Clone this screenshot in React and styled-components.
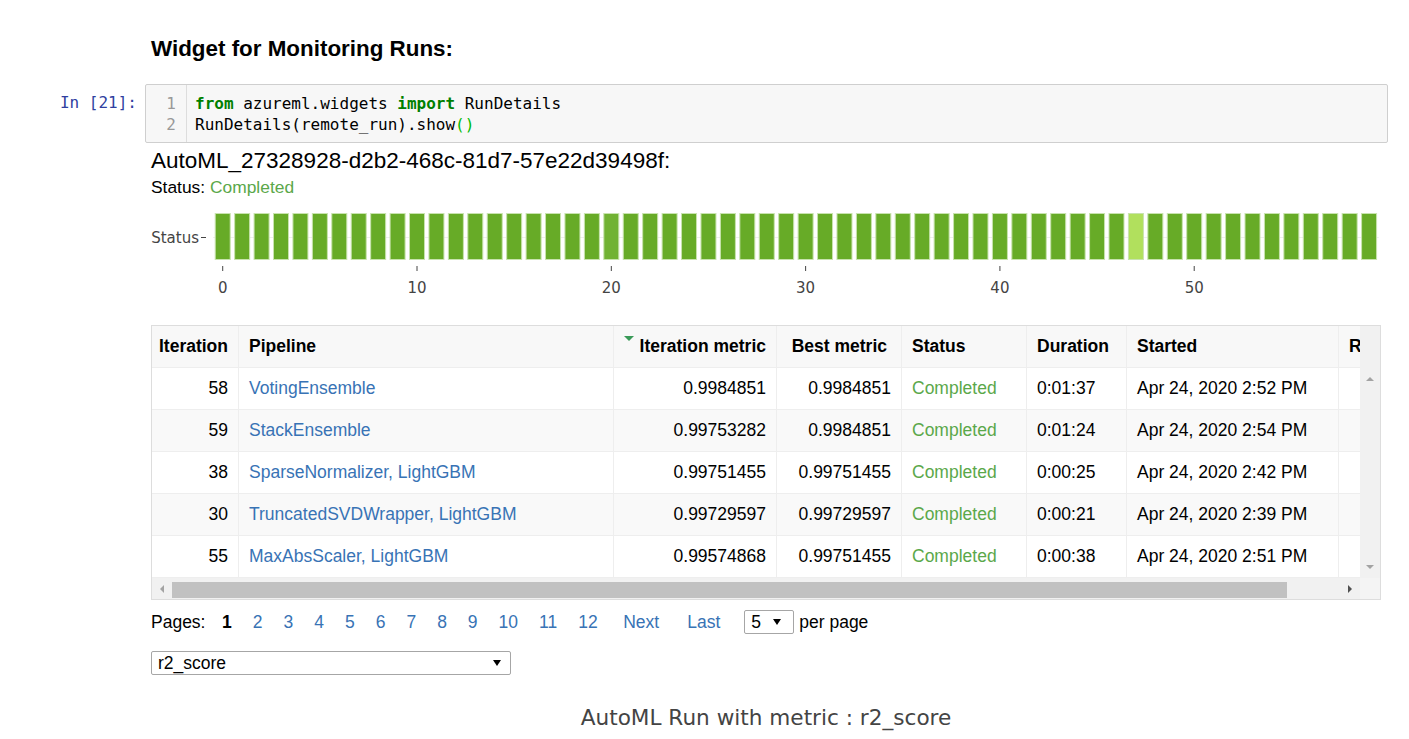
import styled, { createGlobalStyle } from "styled-components";

const GlobalStyle = createGlobalStyle`
  body {
    margin: 0;
    background: #fff;
    color: #000;
    font-family: "Liberation Sans", Arial, sans-serif;
  }
`;

const BAR_COUNT = 60;
const PITCH = 19.43;
const BAR_LEFT = 62;

const barFill = (i) => {
  if (i === 47) return "#b1e05d";
  if (i === 20) return "#71b233";
  return "#67ab27";
};

const COLUMNS = [
  { title: "Iteration", width: 87, align: "right" },
  { title: "Pipeline", width: 375, align: "left" },
  { title: "Iteration metric", width: 163, align: "right", sorted: true },
  { title: "Best metric", width: 125, align: "right", pad: 14 },
  { title: "Status", width: 125, align: "left" },
  { title: "Duration", width: 100, align: "left" },
  { title: "Started", width: 212, align: "left" },
  { title: "Run ID", width: 150, align: "left" },
];

const runs = [
  ["58", "VotingEnsemble", "0.9984851", "0.9984851", "0:01:37", "Apr 24, 2020 2:52 PM"],
  ["59", "StackEnsemble", "0.99753282", "0.9984851", "0:01:24", "Apr 24, 2020 2:54 PM"],
  ["38", "SparseNormalizer, LightGBM", "0.99751455", "0.99751455", "0:00:25", "Apr 24, 2020 2:42 PM"],
  ["30", "TruncatedSVDWrapper, LightGBM", "0.99729597", "0.99729597", "0:00:21", "Apr 24, 2020 2:39 PM"],
  ["55", "MaxAbsScaler, LightGBM", "0.99574868", "0.99751455", "0:00:38", "Apr 24, 2020 2:51 PM"],
];

const pages = ["2", "3", "4", "5", "6", "7", "8", "9", "10", "11", "12"];

const gridColumns = COLUMNS.map((c) => `${c.width}px`).join(" ");

const Page = styled.div`
  width: 1409px;
  padding-top: 36px;
`;

const MarkdownRow = styled.div`
  padding-left: 151px;
`;

const Heading = styled.h3`
  margin: 0;
  font-size: 22.4px;
  line-height: 26px;
  font-weight: 700;
`;

const CellRow = styled.div`
  display: flex;
  margin-top: 22px;
`;

const Prompt = styled.div`
  width: 145px;
  box-sizing: border-box;
  padding: 8px 8px 0 0;
  text-align: right;
  font-family: "DejaVu Sans Mono", monospace;
  font-size: 16px;
  line-height: 21px;
  color: #303f9f;
`;

const CodeBox = styled.div`
  width: 1243px;
  box-sizing: border-box;
  display: flex;
  border: 1px solid #cfcfcf;
  border-radius: 2px;
  background: #f7f7f7;
`;

const Gutter = styled.div`
  width: 41px;
  box-sizing: border-box;
  padding: 7.5px 10px 7.5px 0;
  border-right: 1px solid #ddd;
  text-align: right;
  font-family: "DejaVu Sans Mono", monospace;
  font-size: 16px;
  line-height: 21px;
  color: #999;
`;

const CodeLines = styled.div`
  padding: 7.5px 8px;
  font-family: "DejaVu Sans Mono", monospace;
  font-size: 16px;
  line-height: 21px;
  white-space: pre;
  color: #000;
`;

const Keyword = styled.span`
  color: #008000;
  font-weight: 700;
`;

const Bracket = styled.span`
  color: #00bb00;
`;

const Output = styled.div`
  padding-left: 151px;
  margin-top: 6px;
`;

const RunTitle = styled.div`
  font-size: 22.5px;
  line-height: 24px;
`;

const StatusLine = styled.div`
  margin-top: 4px;
  font-size: 17.4px;
  line-height: 20px;
`;

const Done = styled.span`
  color: #5ba84a;
`;

const Chart = styled.svg`
  display: block;
  margin-top: 3px;
  overflow: visible;
  font-family: "DejaVu Sans", Verdana, sans-serif;
`;

const Frame = styled.div`
  margin-top: 15px;
  width: 1230px;
  box-sizing: border-box;
  border: 1px solid #ddd;
  display: grid;
  grid-template-columns: 1208px 20px;
  grid-template-rows: 42px 210px 21px;
  font-size: 17.5px;
`;

const Clip = styled.div`
  overflow: hidden;
`;

const Row = styled.div`
  display: grid;
  grid-template-columns: ${gridColumns};
  width: max-content;
  height: 42px;
  background: ${(p) => (p.$head ? "#f8f8f8" : p.$striped ? "#f9f9f9" : "#fff")};
  font-weight: ${(p) => (p.$head ? 700 : 400)};
`;

const Cell = styled.div`
  position: relative;
  box-sizing: border-box;
  display: flex;
  align-items: center;
  justify-content: ${(p) => (p.$align === "right" ? "flex-end" : "flex-start")};
  padding: 0 ${(p) => p.$pad || 10}px 0 10px;
  border-right: 1px solid #eee;
  border-bottom: 1px solid #eee;
  white-space: nowrap;
  overflow: hidden;
`;

const SortMark = styled.span`
  position: absolute;
  top: 10px;
  left: 10px;
  width: 0;
  height: 0;
  border-left: 5px solid transparent;
  border-right: 5px solid transparent;
  border-top: 5px solid #3a9a58;
`;

const Link = styled.span`
  color: #3873b5;
`;

const Filler = styled.div`
  background: #f1f1f1;
`;

const VScroll = styled.div`
  background: #f1f1f1;
  display: flex;
  flex-direction: column;
  justify-content: space-between;
  align-items: center;
  padding: 9px 0;
`;

const HScroll = styled.div`
  background: #f1f1f1;
  display: flex;
  align-items: center;
`;

const ArrowButton = styled.div`
  width: 20px;
  height: 21px;
  display: flex;
  align-items: center;
  justify-content: center;
  flex: none;
`;

const Thumb = styled.div`
  width: 1115px;
  height: 16px;
  margin-top: 2px;
  background: #c1c1c1;
`;

const Spacer = styled.div`
  flex: 1;
`;

const Corner = styled.div`
  background: #f4f4f4;
`;

const Pager = styled.div`
  margin-top: 10px;
  height: 24px;
  display: flex;
  align-items: center;
  font-size: 17.5px;
`;

const PagerLabel = styled.span`
  margin-right: 6px;
`;

const PageLink = styled.span`
  padding: 0 ${(p) => (p.$wide ? "13px" : "10.5px")};
  margin-left: ${(p) => (p.$wide ? 2 : 0)}px;
  color: ${(p) => (p.$current ? "#000" : "#3873b5")};
  font-weight: ${(p) => (p.$current ? 700 : 400)};
`;

const SelectBox = styled.div`
  box-sizing: border-box;
  width: ${(p) => p.$width}px;
  height: 24px;
  margin-left: ${(p) => p.$offset || 0}px;
  padding: 0 ${(p) => p.$arrowPad}px 0 6px;
  display: flex;
  align-items: center;
  justify-content: space-between;
  border: 1px solid #a6a6a6;
  border-radius: 2px;
  background: #fff;
  font-size: 17.5px;
`;

const PerPageLabel = styled.span`
  margin-left: 5px;
`;

const MetricRow = styled.div`
  margin-top: 17px;
`;

const PlotTitle = styled.div`
  width: 1230px;
  margin-top: 30px;
  text-align: center;
  font-family: "DejaVu Sans", Verdana, sans-serif;
  font-size: 21.6px;
  line-height: 26px;
  color: #444;
`;

const Triangle = ({ dir, color }) => {
  const pts = {
    up: "0,4 4,0 8,4",
    down: "0,0 8,0 4,4",
    left: "4,0 4,8 0,4",
    right: "0,0 0,8 4,4",
  }[dir];
  const horiz = dir === "left" || dir === "right";
  return (
    <svg width={horiz ? 4 : 8} height={horiz ? 8 : 4} viewBox={horiz ? "0 0 4 8" : "0 0 8 4"}>
      <polygon points={pts} fill={color} />
    </svg>
  );
};

const DropArrow = () => (
  <svg width="8" height="6" viewBox="0 0 8 6">
    <polygon points="0,0 8,0 4,6" fill="#000" />
  </svg>
);

const StatusChart = () => {
  const center = (i) => BAR_LEFT + (i + 0.5) * PITCH;
  return (
    <Chart width="1230" height="110">
      <line x1={BAR_LEFT} x2={BAR_LEFT + BAR_COUNT * PITCH} y1="37.5" y2="37.5" stroke="#eee" />
      {Array.from({ length: BAR_COUNT }, (_, i) => (
        <rect
          key={i}
          x={center(i) - 7.5}
          y="13.5"
          width="15"
          height="46"
          fill={barFill(i)}
          stroke="#c8e3ae"
          strokeWidth="1"
        />
      ))}
      <line x1="50" x2="55" y1="37.5" y2="37.5" stroke="#444" />
      <text x="48" y="43" textAnchor="end" fontSize="15" fill="#444">
        Status
      </text>
      {[0, 10, 20, 30, 40, 50].map((t) => (
        <g key={t}>
          <line x1={center(t)} x2={center(t)} y1="66" y2="71" stroke="#444" />
          <text x={center(t)} y="92.5" textAnchor="middle" fontSize="15" fill="#444">
            {t}
          </text>
        </g>
      ))}
    </Chart>
  );
};

const RunTable = () => (
  <Frame>
    <Clip>
      <Row $head>
        {COLUMNS.map((c) => (
          <Cell key={c.title} $align={c.align} $pad={c.pad}>
            {c.sorted && <SortMark />}
            {c.title}
          </Cell>
        ))}
      </Row>
    </Clip>
    <Filler />
    <Clip>
      {runs.map((r, idx) => (
        <Row key={r[0]} $striped={idx % 2 === 1}>
          <Cell $align="right">{r[0]}</Cell>
          <Cell>
            <Link>{r[1]}</Link>
          </Cell>
          <Cell $align="right">{r[2]}</Cell>
          <Cell $align="right">{r[3]}</Cell>
          <Cell>
            <Done>Completed</Done>
          </Cell>
          <Cell>{r[4]}</Cell>
          <Cell>{r[5]}</Cell>
          <Cell />
        </Row>
      ))}
    </Clip>
    <VScroll>
      <Triangle dir="up" color="#a3a3a3" />
      <Triangle dir="down" color="#a3a3a3" />
    </VScroll>
    <HScroll>
      <ArrowButton>
        <Triangle dir="left" color="#a3a3a3" />
      </ArrowButton>
      <Thumb />
      <Spacer />
      <ArrowButton>
        <Triangle dir="right" color="#505050" />
      </ArrowButton>
    </HScroll>
    <Corner />
  </Frame>
);

export default function App() {
  return (
    <Page>
      <GlobalStyle />
      <MarkdownRow>
        <Heading>Widget for Monitoring Runs:</Heading>
      </MarkdownRow>
      <CellRow>
        <Prompt>In [21]:</Prompt>
        <CodeBox>
          <Gutter>
            <div>1</div>
            <div>2</div>
          </Gutter>
          <CodeLines>
            <div>
              <Keyword>from</Keyword> azureml.widgets <Keyword>import</Keyword> RunDetails
            </div>
            <div>
              RunDetails(remote_run).show<Bracket>()</Bracket>
            </div>
          </CodeLines>
        </CodeBox>
      </CellRow>
      <Output>
        <RunTitle>AutoML_27328928-d2b2-468c-81d7-57e22d39498f:</RunTitle>
        <StatusLine>
          Status: <Done>Completed</Done>
        </StatusLine>
        <StatusChart />
        <RunTable />
        <Pager>
          <PagerLabel>Pages:</PagerLabel>
          <PageLink $current>1</PageLink>
          {pages.map((p) => (
            <PageLink key={p}>{p}</PageLink>
          ))}
          <PageLink $wide>Next</PageLink>
          <PageLink $wide>Last</PageLink>
          <SelectBox $width={50} $arrowPad={12} $offset={11}>
            <span>5</span>
            <DropArrow />
          </SelectBox>
          <PerPageLabel>per page</PerPageLabel>
        </Pager>
        <MetricRow>
          <SelectBox $width={360} $arrowPad={9}>
            <span>r2_score</span>
            <DropArrow />
          </SelectBox>
        </MetricRow>
        <PlotTitle>AutoML Run with metric : r2_score</PlotTitle>
      </Output>
    </Page>
  );
}
